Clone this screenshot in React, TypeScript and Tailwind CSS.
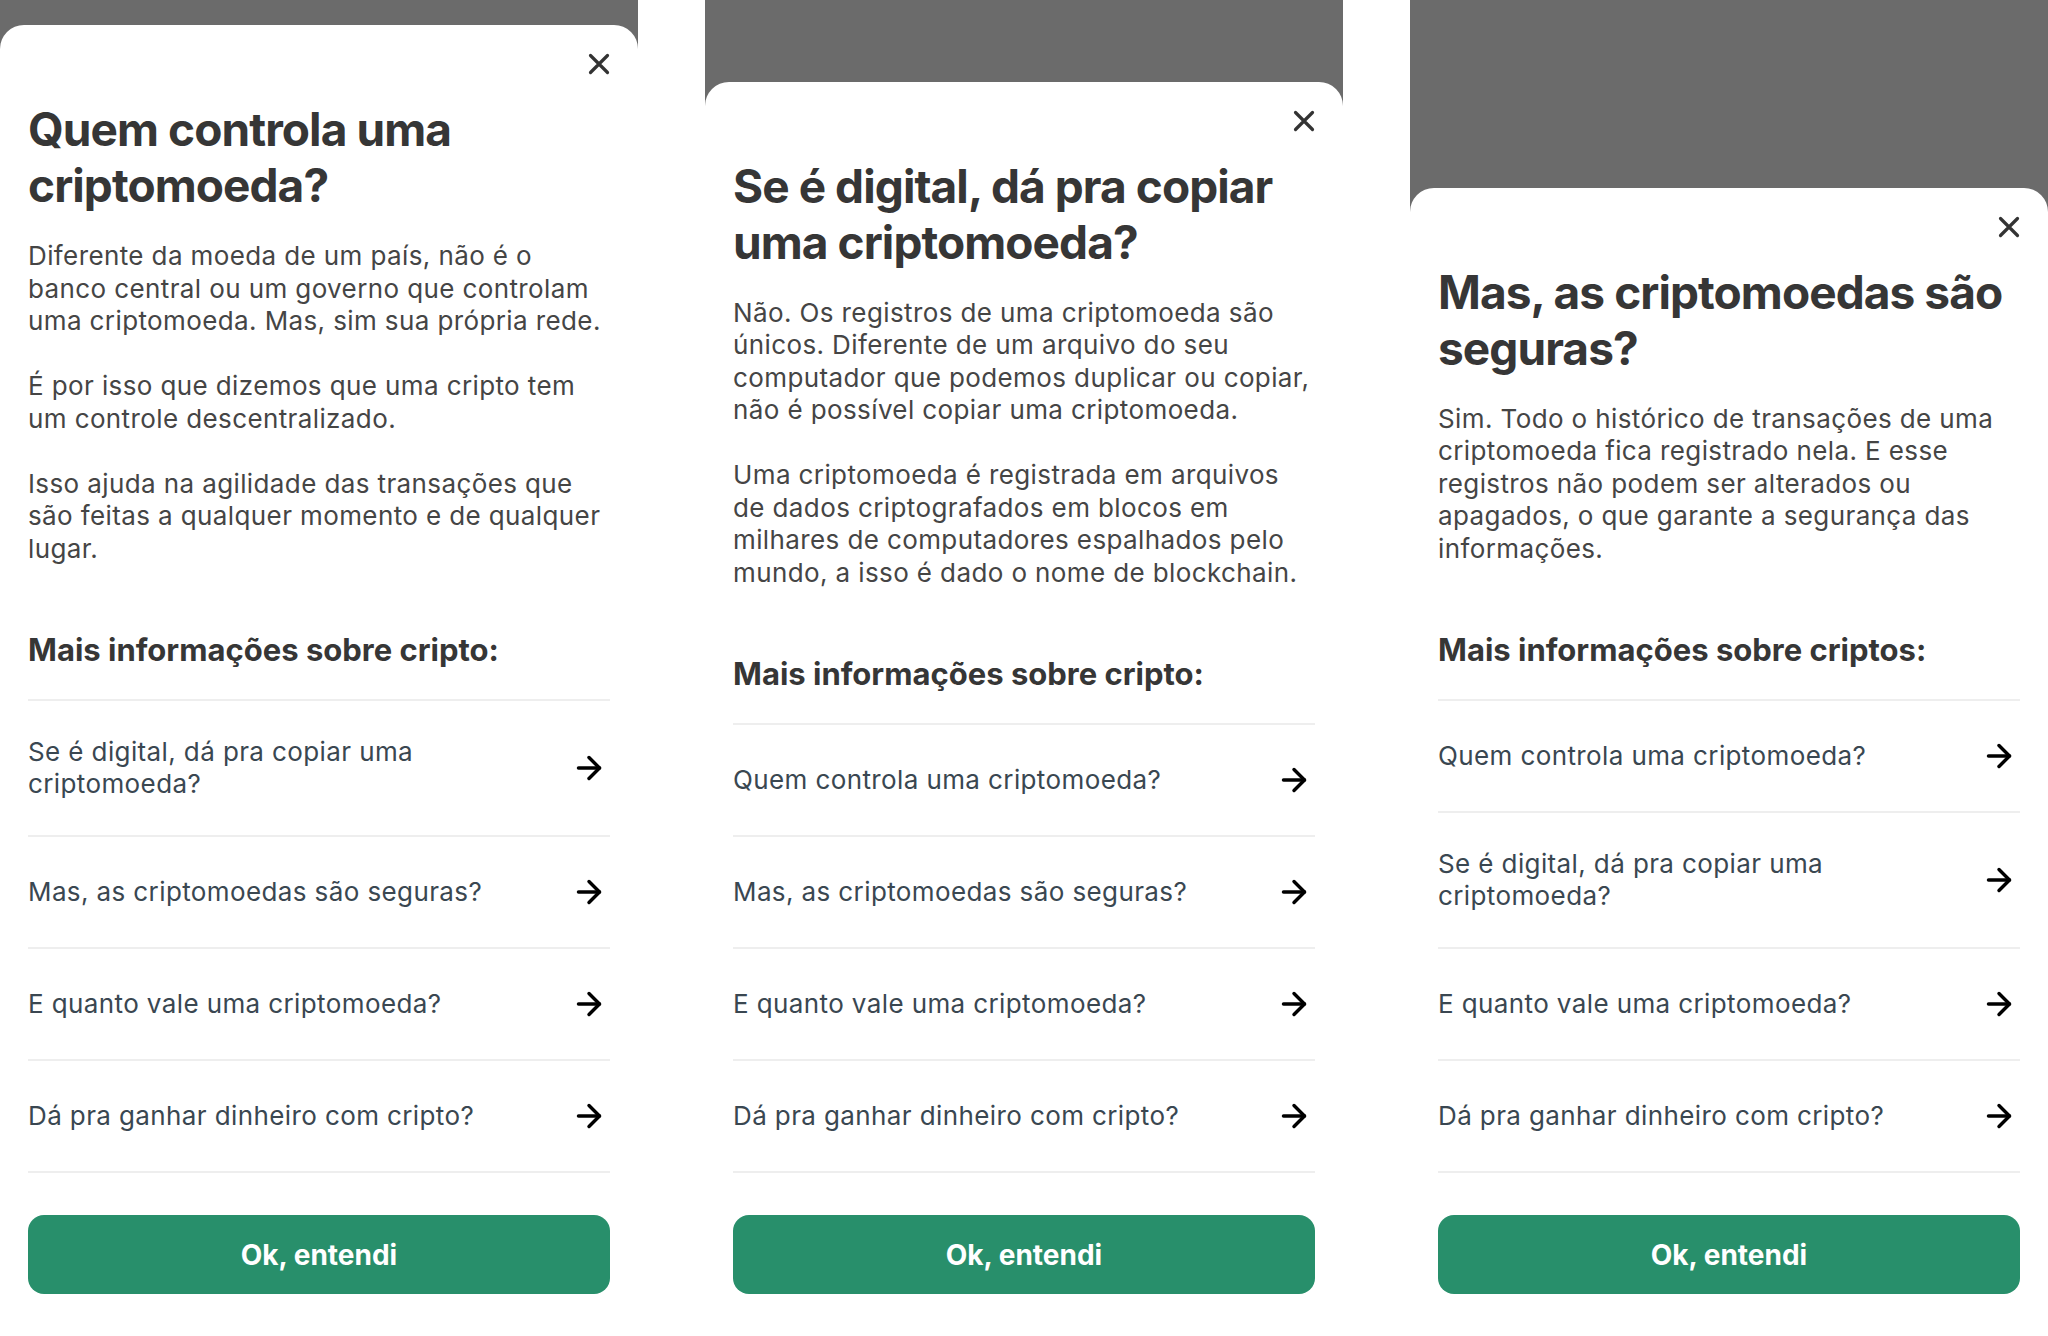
import { ArrowRight } from "lucide-react";

type Sheet = {
  title: string;
  body: string[];
  moreTitle: string;
  links: string[];
};

const sheets: Sheet[] = [
  {
    title: "Quem controla uma\ncriptomoeda?",
    body: [
      "Diferente da moeda de um país, não é o\nbanco central ou um governo que controlam\numa criptomoeda. Mas, sim sua própria rede.",
      "É por isso que dizemos que uma cripto tem\num controle descentralizado.",
      "Isso ajuda na agilidade das transações que\nsão feitas a qualquer momento e de qualquer\nlugar.",
    ],
    moreTitle: "Mais informações sobre cripto:",
    links: [
      "Se é digital, dá pra copiar uma\ncriptomoeda?",
      "Mas, as criptomoedas são seguras?",
      "E quanto vale uma criptomoeda?",
      "Dá pra ganhar dinheiro com cripto?",
    ],
  },
  {
    title: "Se é digital, dá pra copiar\numa criptomoeda?",
    body: [
      "Não. Os registros de uma criptomoeda são\núnicos. Diferente de um arquivo do seu\ncomputador que podemos duplicar ou copiar,\nnão é possível copiar uma criptomoeda.",
      "Uma criptomoeda é registrada em arquivos\nde dados criptografados em blocos em\nmilhares de computadores espalhados pelo\nmundo, a isso é dado o nome de blockchain.",
    ],
    moreTitle: "Mais informações sobre cripto:",
    links: [
      "Quem controla uma criptomoeda?",
      "Mas, as criptomoedas são seguras?",
      "E quanto vale uma criptomoeda?",
      "Dá pra ganhar dinheiro com cripto?",
    ],
  },
  {
    title: "Mas, as criptomoedas são\nseguras?",
    body: [
      "Sim. Todo o histórico de transações de uma\ncriptomoeda fica registrado nela. E esse\nregistros não podem ser alterados ou\napagados, o que garante a segurança das\ninformações.",
    ],
    moreTitle: "Mais informações sobre criptos:",
    links: [
      "Quem controla uma criptomoeda?",
      "Se é digital, dá pra copiar uma\ncriptomoeda?",
      "E quanto vale uma criptomoeda?",
      "Dá pra ganhar dinheiro com cripto?",
    ],
  },
];

function CloseIcon() {
  return (
    <svg width="22" height="22" viewBox="0 0 22 22" fill="none">
      <path
        d="M2.5 2.5l17 17M19.5 2.5l-17 17"
        stroke="#333333"
        strokeWidth="3.2"
        strokeLinecap="round"
      />
    </svg>
  );
}

function InfoSheet({ sheet }: { sheet: Sheet }) {
  return (
    <div className="flex h-[1336px] w-[638px] flex-col justify-end bg-[#6b6b6b]">
      <div className="rounded-t-[24px] bg-white px-[28px] pb-[42px] pt-[28px]">
        <div className="flex justify-end">
          <button className="block h-[22px] w-[22px]">
            <CloseIcon />
          </button>
        </div>

        <h2 className="mt-[26px] whitespace-pre text-[46px] font-bold leading-[56px] tracking-[-0.02em] text-[#363636]">
          {sheet.title}
        </h2>

        <div className="mt-[27px] flex flex-col gap-[32.5px] text-[26px] leading-[32.5px] tracking-[0.015em] text-[#454545]">
          {sheet.body.map((p, i) => (
            <p key={i} className="whitespace-pre">
              {p}
            </p>
          ))}
        </div>

        <h3 className="mt-[66px] text-[31px] font-bold leading-[38px] text-[#363636]">
          {sheet.moreTitle}
        </h3>

        <ul className="mt-[30px] border-t-2 border-[#eeeeee]">
          {sheet.links.map((link) => (
            <li
              key={link}
              className="flex min-h-[112px] items-center justify-between border-b-2 border-[#eeeeee] py-[35px]"
            >
              <span className="whitespace-pre text-[26px] leading-[32px] tracking-[0.015em] text-[#3a4751]">
                {link}
              </span>
              <ArrowRight
                className="mr-[3px] h-[36px] w-[36px] shrink-0 text-black"
                strokeWidth={2.3}
              />
            </li>
          ))}
        </ul>

        <button className="mt-[42px] flex h-[79px] w-full items-center justify-center rounded-[16px] bg-[#288f6b] text-[28px] font-bold text-white">
          Ok, entendi
        </button>
      </div>
    </div>
  );
}

export default function App() {
  return (
    <div
      className="flex h-[1336px] w-[2048px] justify-between overflow-hidden bg-white"
      style={{ fontFamily: "Inter, 'Noto Sans', sans-serif" }}
    >
      {sheets.map((s) => (
        <InfoSheet key={s.title} sheet={s} />
      ))}
    </div>
  );
}
